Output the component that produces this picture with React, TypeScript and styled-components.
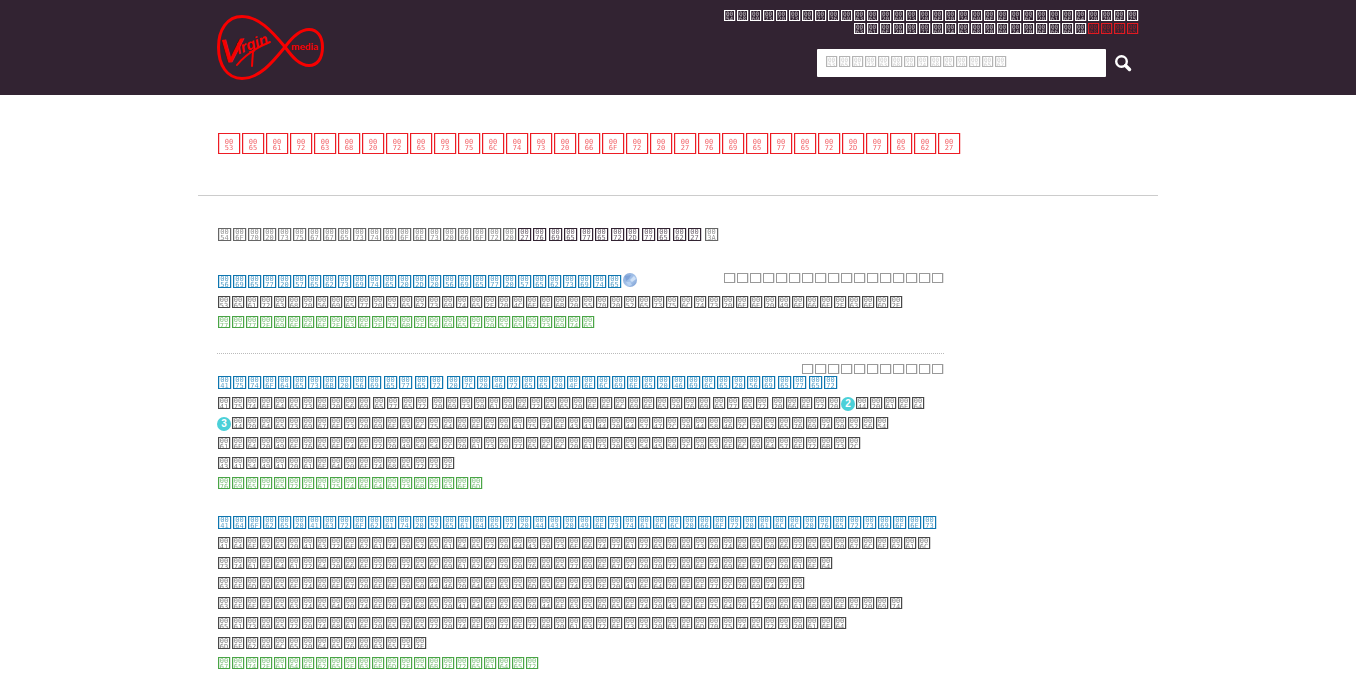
import React from 'react';
import styled, { createGlobalStyle, css } from 'styled-components';

const GlobalStyle = createGlobalStyle`
  * { box-sizing: border-box; }
  body {
    margin: 0;
    background: #fff;
    color: #444;
    font-family: "Liberation Sans", Arial, sans-serif;
  }
  h1, h2, h3, p { margin: 0; font-weight: normal; }
`;

type Size = 'tiny' | 'text' | 'heading' | 'title';

const cellSizes = {
  tiny: css`width: 11px; height: 11px; font-size: 6px; line-height: 5px;`,
  text: css`width: 12px; height: 12px; font-size: 7px; line-height: 6px;`,
  heading: css`width: 13px; height: 13px; font-size: 7px; line-height: 6px;`,
  title: css`width: 22px; height: 21px; padding-top: 5px; font-size: 7px; line-height: 6px;`,
};

const Run = styled.span<{ $bold?: boolean }>`
  display: inline-flex;
  will-change: transform;
  color: ${(p) => (p.$bold ? 'var(--strong, currentColor)' : 'inherit')};
  ${(p) => p.$bold && css`
    & > span:nth-child(even) { margin-right: 2px; }
    & > span:last-child { margin-right: 3px; }
  `}
`;

const Cell = styled.span<{ $size: Size }>`
  flex: none;
  display: block;
  margin: 0 1px;
  border: 1px solid currentColor;
  box-shadow: 1px 0 0 color-mix(in srgb, currentColor 22%, transparent),
    inset 1px 0 0 color-mix(in srgb, currentColor 22%, transparent);
  font-family: "DejaVu Sans Mono", monospace;
  text-align: center;
  ${(p) => cellSizes[p.$size]}
`;

const Digits = styled.span`
  display: block;
  opacity: 0.7;
`;

const BlankCell = styled.span`
  width: 11px;
  height: 10px;
  margin: 0 1px;
  border: 1px solid currentColor;
  box-shadow: 1px 0 0 #e4e4e4;
`;

function Coded({ text, size, bold }: { text: string; size: Size; bold?: boolean }) {
  return (
    <Run $bold={bold}>
      {Array.from(text).map((ch, i) => {
        const hex = ch.charCodeAt(0).toString(16).toUpperCase().padStart(4, '0');
        return (
          <Cell key={i} $size={size}>
            <Digits>{hex.slice(0, 2)}</Digits>
            <Digits>{hex.slice(2)}</Digits>
          </Cell>
        );
      })}
    </Run>
  );
}

/* Parts between asterisks are the matched search terms. */
function Marked({ text, size }: { text: string; size: Size }) {
  return (
    <>
      {text.split('*').map((part, i) =>
        part ? <Coded key={i} text={part} size={size} bold={i % 2 === 1} /> : null
      )}
    </>
  );
}

const Header = styled.header`
  background: #322332;
`;

const HeaderInner = styled.div`
  max-width: 960px;
  min-height: 95px;
  margin: 0 auto;
  padding: 10px 19px 0;
  display: flex;
  justify-content: space-between;
`;

const LogoLink = styled.a`
  display: block;
  height: 66px;
  margin-top: 5px;
`;

const Tools = styled.div`
  display: flex;
  flex-direction: column;
  align-items: flex-end;
`;

const Notice = styled.p`
  display: flex;
  height: 13px;
  color: #fff;
`;

const NoticeLink = styled.a`
  display: flex;
  color: #e01b22;
  text-decoration: none;
`;

const SearchForm = styled.form`
  display: flex;
  margin-top: 13px;
`;

const SearchField = styled.div`
  display: grid;
  width: 289px;
  height: 28px;
`;

const SearchInput = styled.input`
  grid-area: 1 / 1;
  width: 100%;
  border: 0;
  border-radius: 1px;
  padding: 0 8px;
  background: #fff;
  font: 14px "Liberation Sans", Arial, sans-serif;
`;

const SearchLabel = styled.label`
  grid-area: 1 / 1;
  z-index: 1;
  display: flex;
  padding: 7px 8px;
  color: #b4b4b4;
  pointer-events: none;
`;

const SearchButton = styled.button`
  width: 33px;
  height: 28px;
  border: 0;
  padding: 0 0 0 9px;
  background: none;
  text-align: left;
  line-height: 0;
`;

const Main = styled.main`
  max-width: 960px;
  margin: 0 auto;
`;

const Title = styled.h1`
  display: flex;
  padding: 38px 19px 41px;
  border-bottom: 1px solid #ccc;
  color: #ed1c24;
`;

const Content = styled.div`
  max-width: 765px;
  padding: 32px 19px 20px;
`;

const Suggestions = styled.h2`
  --strong: #322332;
  display: flex;
  margin-bottom: 31px;
  color: #666;
`;

const Sponsored = styled.section`
  padding-bottom: 21px;
  margin-bottom: 9px;
  border-bottom: 1px dotted #bbb;
`;

const Result = styled.article`
  margin-bottom: 20px;
  ${Sponsored} & { margin-bottom: 0; }
`;

const ResultHead = styled.div`
  display: flex;
  flex-wrap: wrap-reverse;
  justify-content: space-between;
  align-items: flex-end;
`;

const ResultTitle = styled.h3`
  display: flex;
  flex: none;
  height: 20px;
`;

const TitleLink = styled.a`
  display: flex;
  padding-top: 3px;
  color: #0e76b0;
  text-decoration: none;
`;

const Source = styled.span`
  display: flex;
  height: 10px;
  margin-left: auto;
  padding-top: 1px;
  color: #999;
`;

const Line = styled.span<{ $url?: boolean }>`
  display: flex;
  height: 20px;
  padding-top: 4px;
  color: ${(p) => (p.$url ? '#4aa546' : '#484848')};
`;

const Badge = styled.span`
  flex: none;
  width: 14px;
  height: 14px;
  border-radius: 7px;
  background: #4bd0d8;
  color: #fff;
  font-size: 10px;
  font-weight: bold;
  line-height: 14px;
  text-align: center;
`;

const Globe = styled.svg`
  margin: 1px 0 0 1px;
`;

function Logo() {
  return (
    <svg width="108" height="66" viewBox="0 0 108 66" role="img" aria-label="Virgin media" fill="none" stroke="#f70000">
      <path
        strokeWidth="3"
        d="M68 32 C54 15 41 1.500 25 1.500 C10 1.500 1.500 15 1.500 32 C1.500 50 10 63.500 25 63.500 C42 63.500 55 48 68 32 C76 21 84 14.500 92 14.500 C100 14.500 105.500 21 105.500 32 C105.500 44 100 50.500 92 50.500 C83 50.500 76 43 68 32 Z"
      />
      <path strokeWidth="2" strokeLinecap="round" d="M20 50 C28 40 38 33 53 27" />
      <path strokeWidth="2" strokeLinecap="round" d="M36 36 L35 51" />
      <g stroke="none" fill="#f70000" fontFamily="Liberation Sans" fontStyle="italic">
        <text x="4" y="47" fontSize="32" stroke="#f70000" strokeWidth="1" transform="rotate(-4 12 47)">V</text>
        <text x="24" y="43" fontWeight="bold" fontSize="15" transform="rotate(-20 12 48)">irgin</text>
      </g>
      <text x="74" y="35" fontFamily="Lato" fontWeight="700" fontSize="10" stroke="none" fill="#f70000">media</text>
    </svg>
  );
}

function SearchIcon() {
  return (
    <svg width="17" height="17" viewBox="0 0 17 17" fill="none" stroke="#fff" aria-hidden="true">
      <circle cx="6.500" cy="6.500" r="5.300" strokeWidth="2.400" />
      <path d="M10.500 10.500 L14.500 14.500" strokeWidth="3.500" strokeLinecap="round" />
    </svg>
  );
}

function GlobeIcon() {
  return (
    <Globe width="14" height="14" viewBox="0 0 14 14" aria-hidden="true">
      <defs>
        <linearGradient id="globe" x1="0" y1="0" x2="1" y2="1">
          <stop offset="0" stopColor="#86a7d8" />
          <stop offset="0.600" stopColor="#a9c6ec" />
          <stop offset="1" stopColor="#6f93cb" />
        </linearGradient>
      </defs>
      <circle cx="7" cy="7" r="7" fill="url(#globe)" />
      <path d="M7 7 L11 3 L13 6 L9 9 Z" fill="#cfe1f7" />
      <path d="M2 3 L8 2 L6 6 L3 8 Z" fill="#6e95d0" opacity="0.600" />
      <path d="M3 9 L7 9 L9 12 L6 13 Z" fill="#b9d2f1" />
    </Globe>
  );
}

type ResultData = {
  title: string;
  globe?: boolean;
  source?: number;
  lines: string[];
  url: string;
};

const sponsored: ResultData = {
  title: 'View Website - View Website',
  globe: true,
  source: 17,
  lines: ['Search View Website. Look Up Results on Info.com.'],
  url: 'www.info.co.uk/View Website',
};

const results: ResultData[] = [
  {
    title: 'Autodesk *Viewer* | Free Online File *Viewer*',
    source: 11,
    lines: [
      'Autodesk *Viewer* is a free online *viewer* for {2}D and',
      '{3}D designs including AutoCAD DWG, DXF, Revit RVT',
      'and Inventor IPT, as well as STEP, SolidWorks,',
      'CATIA and others.',
    ],
    url: 'viewer.autodesk.com',
  },
  {
    title: 'Adobe Acrobat Reader DC Install for all versions',
    lines: [
      'Adobe Acrobat Reader DC software is the free global',
      'standard for reliably viewing, printing, and',
      "commenting on PDF documents. And now, it's",
      'connected to the Adobe Document Cloud \u2212 making it',
      'easier than ever to work across computers and',
      'mobile devices.',
    ],
    url: 'get.adobe.com/uk/reader',
  },
];

function DescriptionLine({ text }: { text: string }) {
  return (
    <Line>
      {text.split(/(\{\d\})/).map((part, i) =>
        part.startsWith('{') ? (
          <Badge key={i}>{part[1]}</Badge>
        ) : (
          <Marked key={i} text={part} size="text" />
        )
      )}
    </Line>
  );
}

function ResultItem({ data }: { data: ResultData }) {
  return (
    <Result>
      <ResultHead>
        <ResultTitle>
          <TitleLink href="#" aria-label={data.title.replace(/\*/g, '')}>
            <Marked text={data.title} size="heading" />
          </TitleLink>
          {data.globe && <GlobeIcon />}
        </ResultTitle>
        {data.source && (
          <Source>
            {Array.from({ length: data.source }, (_, i) => <BlankCell key={i} />)}
          </Source>
        )}
      </ResultHead>
      <p>
        {data.lines.map((line) => <DescriptionLine key={line} text={line} />)}
      </p>
      <Line $url><Coded text={data.url} size="text" /></Line>
    </Result>
  );
}

export default function App() {
  return (
    <>
      <GlobalStyle />
      <Header>
        <HeaderInner>
          <LogoLink href="#"><Logo /></LogoLink>
          <Tools>
            <Notice><Coded text="This service is optional and you" size="tiny" /></Notice>
            <Notice>
              <Coded text="can switch it off " size="tiny" />
              <NoticeLink href="#" aria-label="here"><Coded text="here" size="tiny" /></NoticeLink>
            </Notice>
            <SearchForm onSubmit={(e) => e.preventDefault()}>
              <SearchField>
                <SearchInput id="query" type="text" />
                <SearchLabel htmlFor="query"><Coded text="Search the Web" size="tiny" /></SearchLabel>
              </SearchField>
              <SearchButton type="submit" aria-label="Search"><SearchIcon /></SearchButton>
            </SearchForm>
          </Tools>
        </HeaderInner>
      </Header>
      <Main>
        <Title><Coded text="Search results for 'viewer-web'" size="title" /></Title>
        <Content>
          <Suggestions><Marked text="Top suggestions for *'viewer-web'*:" size="heading" /></Suggestions>
          <Sponsored><ResultItem data={sponsored} /></Sponsored>
          {results.map((r) => <ResultItem key={r.title} data={r} />)}
        </Content>
      </Main>
    </>
  );
}
